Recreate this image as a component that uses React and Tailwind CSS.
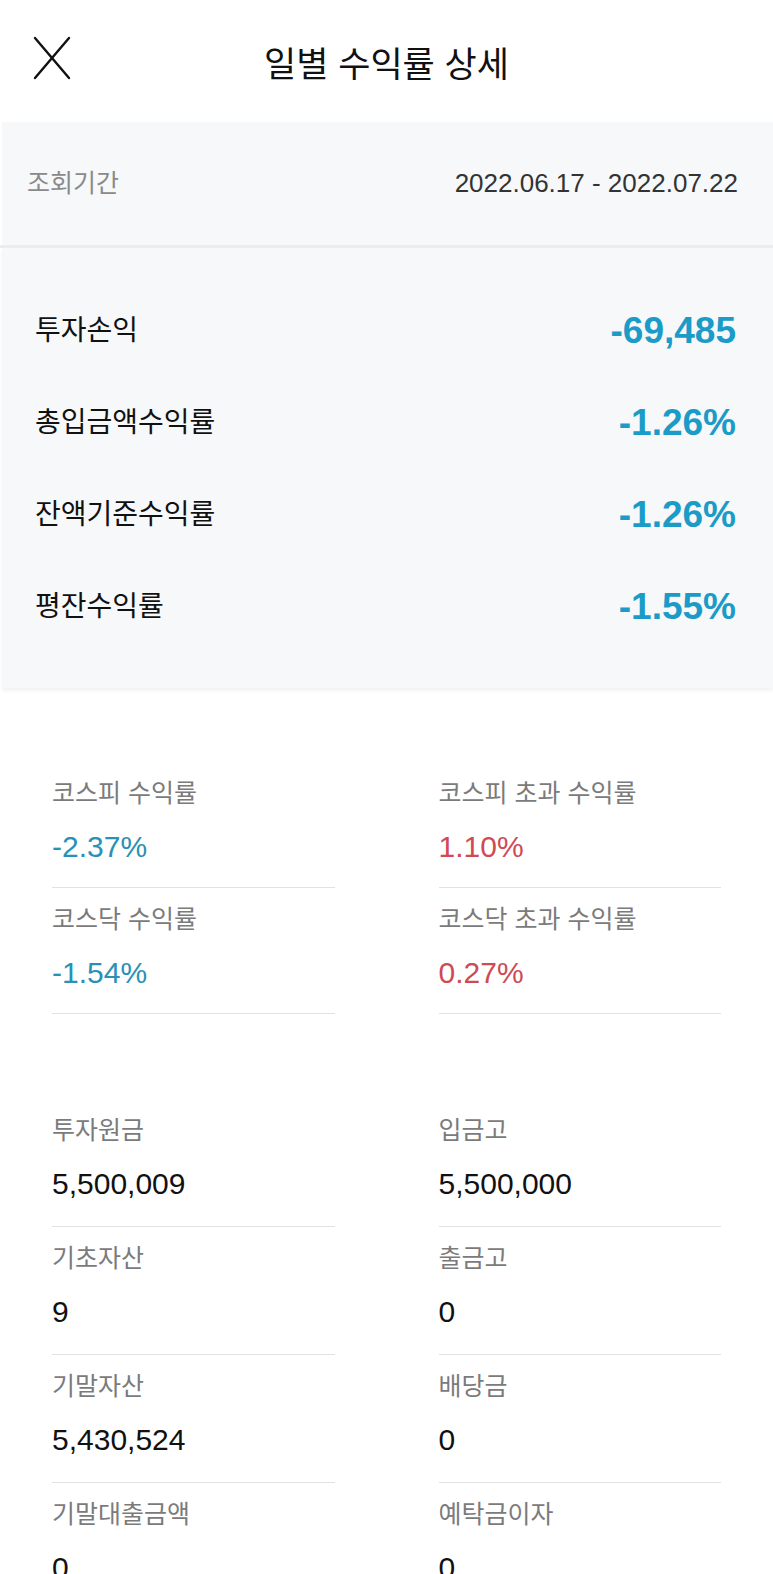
import React from "react";

const FONT = { fontFamily: '"Liberation Sans", "Noto Sans CJK KR", sans-serif' };

function Cell({ label, value, color, tall }) {
  return (
    <div className={`border-b border-[#e2e2e2] pt-[16px] ${tall ? "pb-[25px]" : "pb-[23px]"}`}>
      <div className="h-[30px] leading-[30px] text-[25px] text-[#7b7b7b]">{label}</div>
      <div className={`mt-[22px] h-[34px] leading-[34px] text-[30px] ${color}`}>{value}</div>
    </div>
  );
}

function Row({ label, value }) {
  return (
    <div className="flex h-[92px] items-center justify-between">
      <span className="text-[28px] text-[#111]">{label}</span>
      <span className="text-[37px] font-bold text-[#1b9bc8]">{value}</span>
    </div>
  );
}

export default function App() {
  return (
    <div className="w-[773px] bg-white" style={FONT}>
      {/* header */}
      <div className="relative flex h-[122px] items-center justify-center">
        <svg
          className="absolute left-[33px] top-[36px]"
          width="38"
          height="44"
          viewBox="0 0 38 44"
          fill="none"
          stroke="#111"
          strokeWidth="2.4"
          strokeLinecap="round"
        >
          <line x1="2" y1="2" x2="36" y2="42" />
          <line x1="36" y1="2" x2="2" y2="42" />
        </svg>
        <h1 className="mt-[8px] text-[35px] font-normal text-[#111]">일별 수익률 상세</h1>
      </div>

      {/* period */}
      <div className="ml-[2px] flex h-[123px] items-center justify-between bg-[#f7f8fa] pl-[25px] pr-[35px]">
        <span className="text-[25px] text-[#8a8a8a]">조회기간</span>
        <span className="text-[26px] text-[#333]">2022.06.17 - 2022.07.22</span>
      </div>
      <div className="h-[3px] bg-[#ececee]" />

      {/* summary */}
      <div className="ml-[2px] bg-[#f7f8fa] pl-[33px] pr-[37px] pt-[37px] pb-[35px] shadow-[0_3px_3px_rgba(0,0,0,0.05)]">
        <Row label="투자손익" value="-69,485" />
        <Row label="총입금액수익률" value="-1.26%" />
        <Row label="잔액기준수익률" value="-1.26%" />
        <Row label="평잔수익률" value="-1.55%" />
      </div>

      {/* index returns */}
      <div className="mt-[74px] grid grid-cols-2 gap-x-[104px] px-[52px]">
        <Cell label="코스피 수익률" value="-2.37%" color="text-[#2a90b6]" />
        <Cell label="코스피 초과 수익률" value="1.10%" color="text-[#cf4a53]" />
        <Cell label="코스닥 수익률" value="-1.54%" color="text-[#2a90b6]" />
        <Cell label="코스닥 초과 수익률" value="0.27%" color="text-[#cf4a53]" />
      </div>

      {/* amounts */}
      <div className="mt-[85px] grid grid-cols-2 gap-x-[104px] px-[52px]">
        <Cell tall label="투자원금" value="5,500,009" color="text-[#111]" />
        <Cell tall label="입금고" value="5,500,000" color="text-[#111]" />
        <Cell tall label="기초자산" value="9" color="text-[#111]" />
        <Cell tall label="출금고" value="0" color="text-[#111]" />
        <Cell tall label="기말자산" value="5,430,524" color="text-[#111]" />
        <Cell tall label="배당금" value="0" color="text-[#111]" />
        <Cell tall label="기말대출금액" value="0" color="text-[#111]" />
        <Cell tall label="예탁금이자" value="0" color="text-[#111]" />
      </div>
    </div>
  );
}
